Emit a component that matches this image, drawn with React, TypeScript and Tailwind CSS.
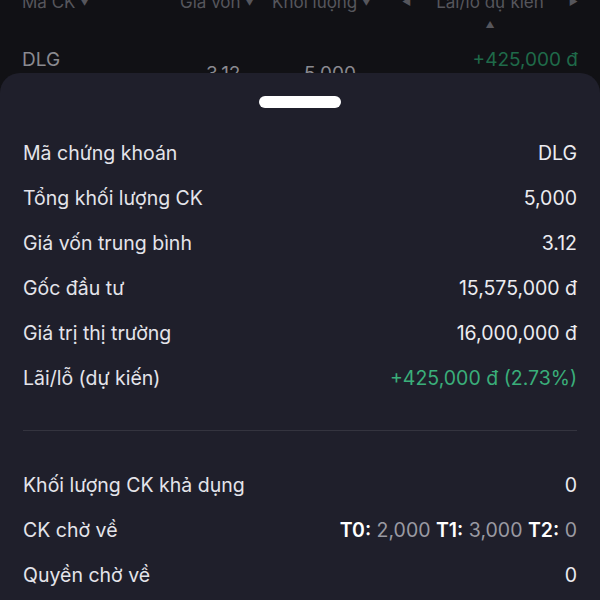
import React from "react";

const Row = ({ label, children }: { label: string; children: React.ReactNode }) => (
  <div className="flex items-center justify-between h-[45px]">
    <span className="text-[19.5px] text-[#e4e4ea]">{label}</span>
    <span className="text-[19.5px] text-[#ececf0]">{children}</span>
  </div>
);

export default function App() {
  return (
    <div
      className="relative w-[600px] h-[600px] overflow-hidden bg-[#111115]"
      style={{ fontFamily: "Inter, 'Noto Sans', sans-serif" }}
    >
      {/* background table (dimmed) */}
      <div className="relative -mt-[12px] px-[22px] text-[#56565c]">
        <div className="flex items-start h-[44px] text-[17px]">
          <div className="flex items-center gap-1 w-[158px] pt-[2px]">
            <span>Mã CK</span>
            <span className="text-[10px]">▼</span>
          </div>
          <div className="flex items-center gap-1 w-[92px] pt-[2px]">
            <span>Giá vốn</span>
            <span className="text-[10px]">▼</span>
          </div>
          <div className="flex items-center gap-1 w-[130px] pt-[2px]">
            <span>Khối lượng</span>
            <span className="text-[10px]">▼</span>
          </div>
          <div className="flex-1 flex items-start justify-between pt-[2px]">
            <span className="text-[10px] mt-[4px]">◀</span>
            <div className="flex flex-col items-center">
              <span>Lãi/lỗ dự kiến</span>
              <span className="text-[9px] leading-none mt-[4px]">▲</span>
            </div>
            <span className="text-[10px] mt-[4px]">▶</span>
          </div>
        </div>
        <div className="flex items-start mt-[14px] text-[19px]">
          <span className="w-[184px] text-[#8a8a90]">DLG</span>
          <span className="w-[98px] mt-[14px] text-[#8a8a90]">3.12</span>
          <span className="w-[120px] mt-[14px] text-[#8a8a90]">5,000</span>
          <span className="flex-1 text-right text-[#1f6a49]">+425,000 đ</span>
        </div>
      </div>

      {/* bottom sheet */}
      <div className="absolute left-0 right-0 top-[73px] bottom-0 rounded-t-[20px] bg-[#1f1f2b] px-[23px]">
        <div className="flex justify-center pt-[23px]">
          <div className="w-[82px] h-[12px] rounded-full bg-white" />
        </div>
        <div className="mt-[23px]">
          <Row label="Mã chứng khoán">DLG</Row>
          <Row label="Tổng khối lượng CK">5,000</Row>
          <Row label="Giá vốn trung bình">3.12</Row>
          <Row label="Gốc đầu tư">15,575,000 đ</Row>
          <Row label="Giá trị thị trường">16,000,000 đ</Row>
          <Row label="Lãi/lỗ (dự kiến)">
            <span className="text-[#3aae7a]">+425,000 đ (2.73%)</span>
          </Row>
        </div>
        <div className="mt-[29px] h-px bg-[#34343f]" />
        <div className="mt-[32px]">
          <Row label="Khối lượng CK khả dụng">0</Row>
          <Row label="CK chờ về">
            <span className="font-semibold text-white">T0:</span>
            <span className="text-[#9a9aa2]"> 2,000 </span>
            <span className="font-semibold text-white">T1:</span>
            <span className="text-[#9a9aa2]"> 3,000 </span>
            <span className="font-semibold text-white">T2:</span>
            <span className="text-[#9a9aa2]"> 0</span>
          </Row>
          <Row label="Quyền chờ về">0</Row>
        </div>
      </div>
    </div>
  );
}
